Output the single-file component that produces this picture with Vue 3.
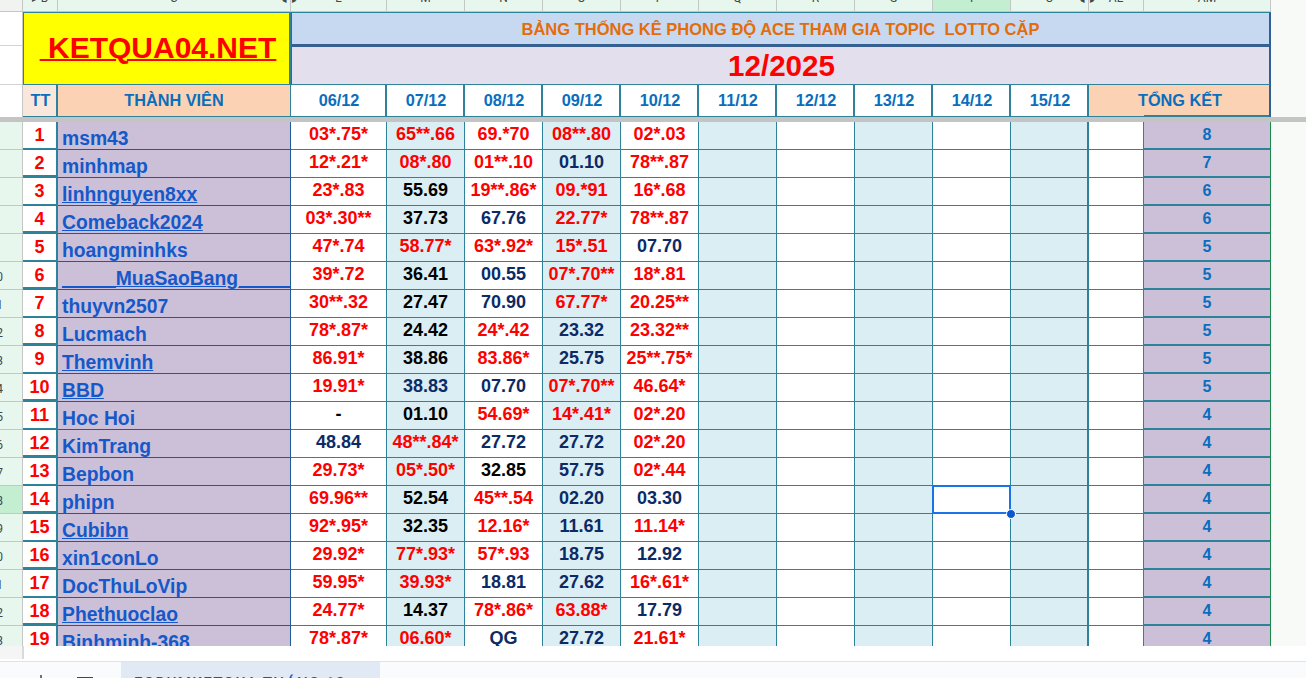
<script setup>
const colHeads = [
  { t: '▸ B' }, { t: 'C', end: true }, { t: 'L', arrow: true }, { t: 'M' }, { t: 'N' }, { t: 'O' }, { t: 'P' },
  { t: 'Q' }, { t: 'R' }, { t: 'S' }, { t: 'T', on: true }, { t: 'U', end: true }, { t: 'AL', arrow: true }, { t: 'AM' }
]
const dates = ['06/12','07/12','08/12','09/12','10/12','11/12','12/12','13/12','14/12','15/12']
const rows = [
  ['msm43', false, 8, ['03*.75*','65**.66','69.*70','08**.80','02*.03']],
  ['minhmap', false, 7, ['12*.21*','08*.80','01**.10','01.10','78**.87']],
  ['linhnguyen8xx', true, 6, ['23*.83','~55.69','19**.86*','09.*91','16*.68']],
  ['Comeback2024', true, 6, ['03*.30**','~37.73','67.76','22.77*','78**.87']],
  ['hoangminhks', false, 5, ['47*.74','58.77*','63*.92*','15*.51','07.70']],
  ['_____MuaSaoBang_____', true, 5, ['39*.72','~36.41','00.55','07*.70**','18*.81']],
  ['thuyvn2507', false, 5, ['30**.32','~27.47','70.90','67.77*','20.25**']],
  ['Lucmach', false, 5, ['78*.87*','~24.42','24*.42','23.32','23.32**']],
  ['Themvinh', true, 5, ['86.91*','~38.86','83.86*','25.75','25**.75*']],
  ['BBD', true, 5, ['19.91*','38.83','07.70','07*.70**','46.64*']],
  ['Hoc Hoi', false, 4, ['~-','~01.10','54.69*','14*.41*','02*.20']],
  ['KimTrang', false, 4, ['48.84','48**.84*','27.72','27.72','02*.20']],
  ['Bepbon', false, 4, ['29.73*','05*.50*','~32.85','57.75','02*.44']],
  ['phipn', false, 4, ['69.96**','~52.54','45**.54','02.20','03.30']],
  ['Cubibn', true, 4, ['92*.95*','~32.35','12.16*','11.61','11.14*']],
  ['xin1conLo', false, 4, ['29.92*','77*.93*','57*.93','18.75','12.92']],
  ['DocThuLoVip', false, 4, ['59.95*','39.93*','18.81','27.62','16*.61*']],
  ['Phethuoclao', true, 4, ['24.77*','~14.37','78*.86*','63.88*','17.79']],
  ['Binhminh-368', false, 4, ['78*.87*','06.60*','QG','27.72','21.61*']]
]
const tone = (v) => (v.startsWith('~') ? 'black' : v.includes('*') ? 'red' : 'navy')
const clean = (v) => v.replace('~', '')
const cols = [0,1,2,3,4,5,6,7,8,9]
</script>

<template>
  <div class="page">
    <div class="sheet">
      <!-- column letters -->
      <div class="ch corner"></div>
      <div v-for="(c, i) in colHeads" :key="i" class="ch" :class="{ on: c.on }">
        <span v-if="c.arrow" class="tri">▸</span>
        <span class="letter">{{ c.t }}</span>
        <span v-if="c.end" class="tri right">◂</span>
      </div>
      <div class="ch-fill"></div>

      <!-- banner -->
      <div class="rh-top"><i></i><i></i></div>
      <div class="brand"><span> KETQUA04.NET</span></div>
      <div class="titles">
        <div class="title">BẢNG THỐNG KÊ PHONG ĐỘ ACE THAM GIA TOPIC&nbsp; LOTTO CẶP</div>
        <div class="month">12/2025</div>
      </div>
      <div class="fill"></div>

      <!-- header row -->
      <div class="rh-head"></div>
      <div class="hd tt">TT</div>
      <div class="hd member">THÀNH VIÊN</div>
      <div v-for="d in dates" :key="d" class="hd date">{{ d }}</div>
      <div class="hd total">TỔNG KẾT</div>
      <div class="fill"></div>

      <div class="freeze"></div>

      <!-- data rows -->
      <div v-for="(r, i) in rows" :key="r[0]" class="row">
        <div class="rh" :class="{ on: i === 13 }">
          <span v-if="i + 5 >= 10">{{ i + 5 }}</span>
        </div>
        <div class="rank" :class="i % 2 ? 'thick' : 'thin'">{{ i + 1 }}</div>
        <div class="name"><span :class="{ link: r[1] }">{{ r[0] }}</span></div>
        <div v-for="c in cols" :key="c" class="cell" :class="{ tint: c % 2 === 1, last: c === 9 }">
          <span v-if="r[3][c]" :class="tone(r[3][c])">{{ clean(r[3][c]) }}</span>
          <div v-if="i === 13 && c === 8" class="selection"><div class="handle"></div></div>
        </div>
        <div class="cell al"></div>
        <div class="score">{{ r[2] }}</div>
        <div class="fill"></div>
      </div>
    </div>

    <div class="gap"><div class="gap-rh"></div></div>

    <div class="tabs">
      <svg class="plus" width="12" height="12" viewBox="0 0 12 12"><path d="M6 1v10M1 6h10" stroke="#444746" stroke-width="1.5" fill="none"/></svg>
      <div class="menu"></div>
      <div class="tab">FORUMKETQUA THÁNG 12</div>
    </div>
  </div>
</template>

<style>
html, body { margin: 0; background: #fff; }
</style>

<style scoped>
.page {
  width: 1306px; height: 678px; overflow: hidden; display: flex; flex-direction: column;
  font-family: "Liberation Sans", Arial, sans-serif; background: #fff;
}
.sheet {
  height: 646px; flex: none; overflow: hidden; display: grid;
  grid-template-columns: 23px 35px 233px 96px repeat(9, 78px) 55px 127px 35px;
  grid-template-rows: 12px 73px 32px 5px repeat(19, 28px);
}
.ch, .corner, .ch-fill { box-sizing: border-box; background: #e8f7ed; border-bottom: 1px solid #c4c7c5; border-right: 1px solid #c4c7c5; overflow: hidden; position: relative; text-align: center; }
.corner { background: #f1f3f0; }
.ch.on { background: #c3eecf; }
.ch-fill { background: #f8faf7; border: 0; }
.letter { display: block; font: 12px/12px Roboto, sans-serif; color: #444746; margin-top: -8px; }
.tri { position: absolute; left: 1px; top: -6px; font-size: 9px; line-height: 12px; color: #444746; }
.tri.right { left: auto; right: 3px; }

.rh-top { display: flex; flex-direction: column; background: #fff; border-right: 1px solid #c4c7c5; box-sizing: border-box; }
.rh-top i { display: block; box-sizing: border-box; border-bottom: 1px solid #d3d5d3; }
.rh-top i:first-child { height: 34px; }
.rh-top i:last-child { height: 39px; }
.brand {
  grid-column: 2 / 4; box-sizing: border-box; background: #ff0; border: 1px solid #2e8299; border-right-width: 2px;
  display: flex; align-items: center; justify-content: center; color: #f00; font-size: 30px; font-weight: 700;
  white-space: pre; padding: 0 0 1px 3px;
}
.brand span { text-decoration: underline; text-decoration-thickness: 2px; }
.titles {
  grid-column: 4 / 16; display: flex; flex-direction: column; box-sizing: border-box;
  border-left: 1px solid #3a6296; border-right: 2px solid #2f5f96; border-top: 1px solid #2e8299; border-bottom: 1px solid #2e8299;
}
.title {
  height: 34px; box-sizing: border-box; background: #c6d9f0; border-bottom: 3px solid #376092; color: #e46c0a;
  font-size: 16.5px; font-weight: 700; display: flex; align-items: center; justify-content: center; white-space: pre; padding-top: 2px;
}
.month {
  flex: 1; background: #e4dfec; color: #f00; font-size: 29.6px; font-weight: 700;
  display: flex; align-items: center; justify-content: center; box-sizing: border-box; padding-left: 2px;
}
.fill { background: #f8faf7; }

.rh-head { background: #fff; border-right: 1px solid #c4c7c5; box-sizing: border-box; }
.hd {
  box-sizing: border-box; display: flex; align-items: center; justify-content: center; color: #0a6ebd;
  font-size: 16.3px; font-weight: 700; border-bottom: 1px solid #2e8299; white-space: nowrap;
}
.tt { background: #fae7dc; border-right: 2px solid #2e8299; padding-left: 2px; }
.member { background: #fbd3b4; border-right: 1px solid #2e8299; }
.date { background: #fff; border-right: 2px solid #2e8299; padding-left: 2px; }
.total { grid-column: 14 / 16; background: #fbd3b4; border-right: 2px solid #2f5f96; position: relative; padding-left: 2px; }
.total::after { content: ""; position: absolute; left: 55px; right: 0; bottom: 0; height: 1px; background: #2e8299; }
.freeze { grid-column: 1 / -1; background: #c4c4c4; }

.row { display: contents; }
.rh {
  box-sizing: border-box; background: #e8f7ed; border-right: 1px solid #c4c7c5; border-bottom: 1px solid #c4c7c5;
  overflow: hidden; display: flex; align-items: center; padding-top: 2px;
}
.rh.on { background: #c3eecf; }
.rh span { width: 3px; flex: none; display: flex; justify-content: flex-end; font: 12px Roboto, sans-serif; color: #444746; }
.rank {
  box-sizing: border-box; background: #fff; color: #f00; font-size: 18px; font-weight: 700; text-align: center; line-height: 27px;
  border-right: 2px solid #2e8299; height: 28px;
}
.rank.thick { border-bottom: 3px solid #2e8299; }
.rank.thin { border-bottom: 2px solid #2e8299; }
.name {
  box-sizing: border-box; background: #ccc0d9; border-right: 1px solid #1f5a99; border-bottom: 1px solid #1f5a99;
  color: #1558c9; font-size: 19.33px; font-weight: 700; padding: 5px 0 0 4px; line-height: 23px; white-space: pre; overflow: hidden;
}
.link { text-decoration: underline; }
.cell {
  position: relative; box-sizing: border-box; background: #fff; border-right: 1px solid #2e8299; border-bottom: 1px solid #2e8299;
  display: flex; align-items: center; justify-content: center; font-size: 18px; font-weight: 700; padding-bottom: 2px; white-space: nowrap;
}
.cell.tint { background: #dbeef4; }
.cell.last { border-right-width: 2px; }
.red { color: #f00; }
.black { color: #000; }
.navy { color: #0b2a66; }
.score {
  box-sizing: border-box; background: #ccc0d9; color: #0a6ebd; font-size: 16px; font-weight: 700; display: flex; align-items: center; justify-content: center;
  border-bottom: 2px solid #2e8299; border-right: 1px solid #1a8a4a; padding-bottom: 1px;
}
.selection {
  position: absolute; z-index: 2; left: -1px; top: -1px; right: -1px; bottom: -1px; border: 2px solid #1a73e8; box-sizing: border-box;
}
.handle {
  position: absolute; right: -7px; bottom: -7px; width: 8px; height: 8px; background: #0b57d0; border: 1px solid #fff; border-radius: 50%;
}

.gap { height: 15px; flex: none; background: #fff; border-bottom: 1px solid #e1e3e1; }
.gap-rh { width: 22px; height: 13px; background: #f5f5f5; border-right: 2px solid #dadada; }
.tabs { flex: 1; background: #f9fbfd; display: flex; align-items: flex-start; overflow: hidden; }
.plus { margin: 12px 0 0 35px; flex: none; }
.menu { width: 16px; height: 2px; background: #444746; margin: 15px 0 0 30px; flex: none; }
.tab {
  margin-left: 28px; width: 259px; height: 17px; box-sizing: border-box; background: #e1e9f5; color: #0b57d0;
  font: 500 15px/15px Roboto, sans-serif; padding: 14px 0 0 13px; letter-spacing: 1.45px; white-space: nowrap;
}
</style>
